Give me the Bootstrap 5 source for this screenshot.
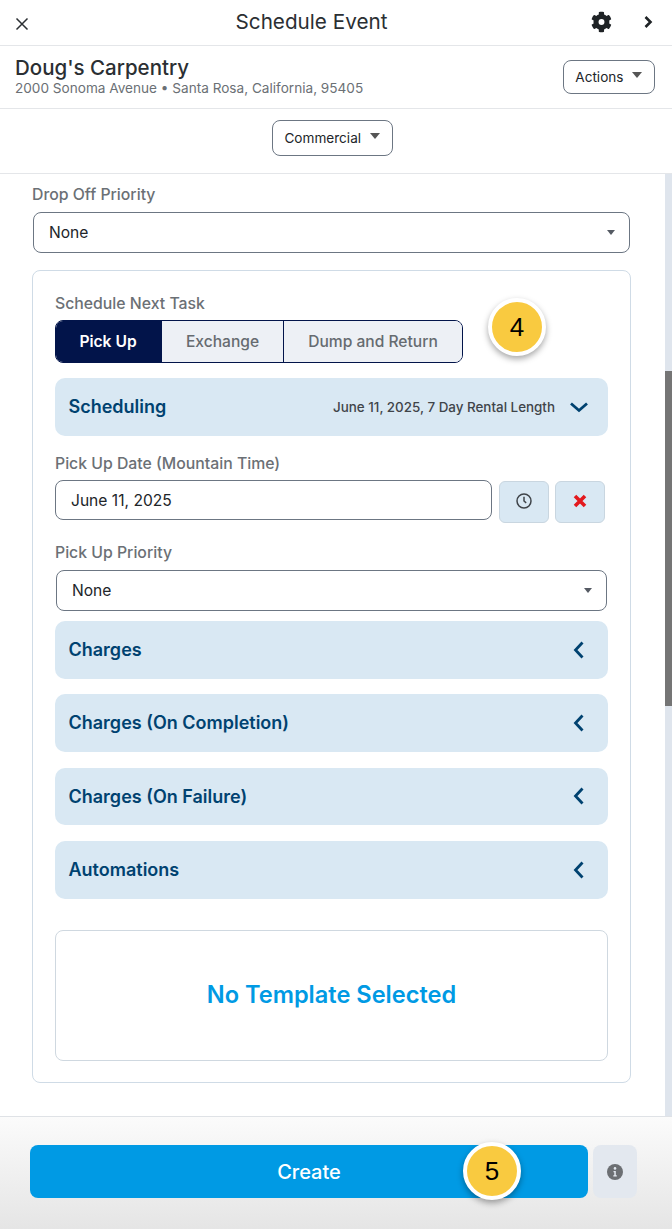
<!DOCTYPE html>
<html lang="en">
<head>
<meta charset="utf-8">
<title>Schedule Event</title>
<link href="https://cdn.jsdelivr.net/npm/bootstrap@5.3.0/dist/css/bootstrap.min.css" rel="stylesheet">
<style>
html,body{height:100%;overflow:hidden}
body{font-family:Inter,"Liberation Sans",sans-serif;color:#212529;background:#fff}
.app-shell{height:1229px;position:relative}
.top-bar{height:46px;border-bottom:1px solid #e4e6e9;padding:0 19px 0 15px}
.top-title{font-size:20.7px;font-weight:400;color:#2b2f33;margin:0;position:absolute;left:0;right:49px;text-align:center;top:9px;line-height:26px}
.top-tools{gap:31px}
.cust-row{height:63px;border-bottom:1px solid #e4e6e9;padding:0 17px 0 15px}
.cust-name{font-size:20.5px;font-weight:500;line-height:24px;color:#2b2f33;margin-top:-1px}
.cust-addr{font-size:13.6px;line-height:17px;color:#6b7075}
.pill-btn{background:#fff;border:1px solid #6c7683;border-radius:8px;font-size:13.6px;color:#212529;padding:0 12px 0 11px;height:34px;display:inline-flex;align-items:center}
.pill-btn.dropdown-toggle::after{margin-left:8.5px;vertical-align:0;border-top-color:#555;border-top-width:6px;border-left-width:5.5px;border-right-width:5.5px;transform:translateY(-2px)}
.type-row{height:65px;border-bottom:1px solid #e4e6e9}
.type-row .pill-btn{height:36px;margin-top:-6px;margin-right:7px}
.scroll-area{height:943px;overflow:hidden}
.scroll-body{padding:11px 0 0 32px;width:631px}
.scroll-track{width:7px;background:#dfe5ed;margin-left:auto;display:flex;flex-direction:column}
.scroll-gap{height:197px;flex:none}
.scroll-thumb{height:335px;background:#757575;flex:none}
.field-label{font-size:15.8px;line-height:20px;color:#6b7075;font-weight:500;display:block;margin:0 0 7px}
.date-label{margin-top:18px;margin-bottom:6px}
.prio-label{margin-top:20px;margin-bottom:7px}
.field-box{border:1px solid #6c7683;border-radius:8px;background:#fff;font-size:15.6px;color:#212529;padding:0 14px 0 15px;display:flex;align-items:center;justify-content:space-between;width:100%}
.sel-caret{width:0;height:0;border-left:4.5px solid transparent;border-right:4.5px solid transparent;border-top:5.5px solid #555a63;flex:none}
.drop-sel{height:41px;margin-left:1px;width:597px}
.task-panel{margin-top:17px;width:599px;height:813px;border:1px solid #cfdbe6;border-radius:8px;padding:23px 22px 0}
.seg-group{display:flex;width:408px;height:43px;border:1px solid #02144a;border-radius:8px;overflow:hidden;margin-top:-1px}
.seg-item{background:#edf0f5;color:#666b70;font-size:15.6px;font-weight:500;border:0;padding:0;display:flex;align-items:center;justify-content:center}
.seg-item.is-on{background:#02144a;color:#fff;font-weight:600;width:106px;padding-right:2px}
.seg-item.wide{width:122px;border-right:1px solid #02144a}
.seg-item.wider{flex:1}
.acc-head{background:#d9e8f3;border-radius:10px;height:58px;padding:0 23px 0 13.5px;color:#004270;font-size:18px;font-weight:600;display:flex;align-items:center;justify-content:space-between}
.acc-meta{font-size:13.4px;font-weight:500;color:#3f4449;margin-right:14px}
.chev-open{margin-right:-4px}
.date-input{height:40px;width:437px;flex:none;padding-top:1px}
.icon-tile{width:50px;height:42px;margin-top:1px;background:#d9e8f3;border:1px solid #c9d6e0;border-radius:6px;padding:0 0 2px;display:flex;align-items:center;justify-content:center}
.tile-first{margin-left:7px}
.tile-next{margin-left:6px}
.pick-sel{height:41px;width:551px;margin-left:1px}
.acc-first{margin-top:10px}
.acc-short{height:57px}
.tmpl-box{margin-top:31px;height:131px;border:1px solid #cfd8e0;border-radius:8px;color:#009ae4;font-size:23.6px;font-weight:600;padding-bottom:1px}
.foot-bar{height:113px;border-top:1px solid #dfe2e6;background:linear-gradient(#fbfbfb,#e5e5e5);padding:28px 35px 0 30px}
.create-btn{width:558px;height:53px;background:#009ae4;border:0;border-radius:8px;color:#fff;font-size:20px;font-weight:500;padding:0}
.info-tile{width:44px;height:53px;background:#e3e8ef;border-radius:8px;margin-left:5px}
.step-dot{position:absolute;width:58px;height:58px;border-radius:50%;background:#f9ca40;border:4px solid #fff;box-shadow:0 3px 6px rgba(0,0,0,.35);font-family:"Liberation Sans",sans-serif;font-size:26px;color:#000;display:flex;align-items:center;justify-content:center}
.step-four{left:488px;top:298px}
.step-five{left:463px;top:1142px}
.gap-15{height:15px}.gap-16{height:16px}
</style>
</head>
<body>
<div class="app-shell d-flex flex-column">
  <div class="top-bar d-flex align-items-center justify-content-between position-relative flex-none">
    <svg width="14" height="14" viewBox="0 0 14 14" class="mt-1"><path d="M1.500 1.500l11 11M12.500 1.500l-11 11" stroke="#2b2f33" stroke-width="1.500" fill="none"/></svg>
    <h1 class="top-title">Schedule Event</h1>
    <div class="top-tools d-flex align-items-center">
      <svg width="21" height="22" viewBox="0 0 512 512"><path fill="#1f2326" d="M487 316l-43-25a196 196 0 0 0 0-70l43-25c5-3 7-9 5-14-11-36-30-68-55-95-4-4-10-5-15-2l-43 25c-18-15-39-27-61-35V25c0-6-4-11-9-12-37-8-75-8-110 0-5 1-9 6-9 12v50c-22 8-43 20-61 35L86 85c-5-3-11-2-15 2-25 27-44 59-55 95-2 5 0 11 5 14l43 25a196 196 0 0 0 0 70l-43 25c-5 3-7 9-5 14 11 36 30 68 55 95 4 4 10 5 15 2l43-25c18 15 39 27 61 35v50c0 6 4 11 9 12 37 8 75 8 110 0 5-1 9-6 9-12v-50c22-8 43-20 61-35l43 25c5 3 11 2 15-2 25-27 44-59 55-95 2-5 0-11-5-14zM256 328a72 72 0 1 1 0-144 72 72 0 0 1 0 144z"/></svg>
      <svg width="10" height="14" viewBox="0 0 10 14"><path d="M2.500 2l5 5-5 5" stroke="#1f2326" stroke-width="2.600" fill="none"/></svg>
    </div>
  </div>
  <div class="cust-row d-flex align-items-center justify-content-between flex-none">
    <div>
      <div class="cust-name">Doug's Carpentry</div>
      <div class="cust-addr">2000 Sonoma Avenue • Santa Rosa, California, 95405</div>
    </div>
    <button class="pill-btn dropdown-toggle" type="button">Actions</button>
  </div>
  <div class="type-row d-flex align-items-center justify-content-center flex-none">
    <button class="pill-btn dropdown-toggle" type="button">Commercial</button>
  </div>
  <div class="scroll-area d-flex flex-none">
    <div class="scroll-body flex-none">
      <label class="field-label">Drop Off Priority</label>
      <div class="field-box drop-sel"><span>None</span><span class="sel-caret"></span></div>
      <div class="task-panel">
        <label class="field-label">Schedule Next Task</label>
        <div class="seg-group">
          <button class="seg-item is-on" type="button">Pick Up</button>
          <button class="seg-item wide" type="button">Exchange</button>
          <button class="seg-item wider" type="button">Dump and Return</button>
        </div>
        <div class="gap-15"></div>
        <div class="acc-head"><span>Scheduling</span><span class="d-flex align-items-center"><span class="acc-meta">June 11, 2025, 7 Day Rental Length</span><svg class="chev-open" width="20" height="12" viewBox="0 0 20 12"><path d="M2 2.500L10 9.500l8-7" stroke="#004270" stroke-width="2.800" fill="none"/></svg></span></div>
        <label class="field-label date-label">Pick Up Date (Mountain Time)</label>
        <div class="d-flex align-items-start">
          <div class="field-box date-input">June 11, 2025</div>
          <button class="icon-tile tile-first" type="button" aria-label="Time"><svg width="16" height="16" viewBox="0 0 16 16"><circle cx="8" cy="8" r="7" stroke="#3f4449" stroke-width="1.500" fill="none"/><path d="M8 3.800V8l2.200 1.800" stroke="#3f4449" stroke-width="1.500" fill="none"/></svg></button>
          <button class="icon-tile tile-next" type="button" aria-label="Clear"><svg width="14" height="14" viewBox="0 0 14 14"><path d="M2 2l10 10M12 2L2 12" stroke="#e3191e" stroke-width="3.600" fill="none"/></svg></button>
        </div>
        <label class="field-label prio-label">Pick Up Priority</label>
        <div class="field-box pick-sel"><span>None</span><span class="sel-caret"></span></div>
        <div class="acc-head acc-first"><span>Charges</span><svg width="12" height="20" viewBox="0 0 12 20"><path d="M9.500 2.500L2.500 10l7 7.500" stroke="#004270" stroke-width="2.800" fill="none"/></svg></div>
        <div class="gap-15"></div>
        <div class="acc-head"><span>Charges (On Completion)</span><svg width="12" height="20" viewBox="0 0 12 20"><path d="M9.500 2.500L2.500 10l7 7.500" stroke="#004270" stroke-width="2.800" fill="none"/></svg></div>
        <div class="gap-16"></div>
        <div class="acc-head acc-short"><span>Charges (On Failure)</span><svg width="12" height="20" viewBox="0 0 12 20"><path d="M9.500 2.500L2.500 10l7 7.500" stroke="#004270" stroke-width="2.800" fill="none"/></svg></div>
        <div class="gap-16"></div>
        <div class="acc-head"><span>Automations</span><svg width="12" height="20" viewBox="0 0 12 20"><path d="M9.500 2.500L2.500 10l7 7.500" stroke="#004270" stroke-width="2.800" fill="none"/></svg></div>
        <div class="tmpl-box d-flex align-items-center justify-content-center">No Template Selected</div>
      </div>
    </div>
    <div class="scroll-track"><div class="scroll-gap"></div><div class="scroll-thumb"></div></div>
  </div>
  <div class="foot-bar d-flex align-items-start flex-none">
    <button class="create-btn" type="button">Create</button>
    <div class="info-tile d-flex align-items-center justify-content-center">
      <svg width="16" height="16" viewBox="0 0 16 16"><circle cx="8" cy="8" r="8" fill="#6c6f73"/><circle cx="8" cy="4.400" r="1.300" fill="#e3e8ef"/><path d="M6.500 7h2.300v4.200h1v1.300H6.300v-1.300h1V8.300H6.500z" fill="#e3e8ef"/></svg>
    </div>
  </div>
  <div class="step-dot step-four">4</div>
  <div class="step-dot step-five">5</div>
</div>
<script src="https://cdn.jsdelivr.net/npm/bootstrap@5.3.0/dist/js/bootstrap.bundle.min.js"></script>
</body>
</html>
